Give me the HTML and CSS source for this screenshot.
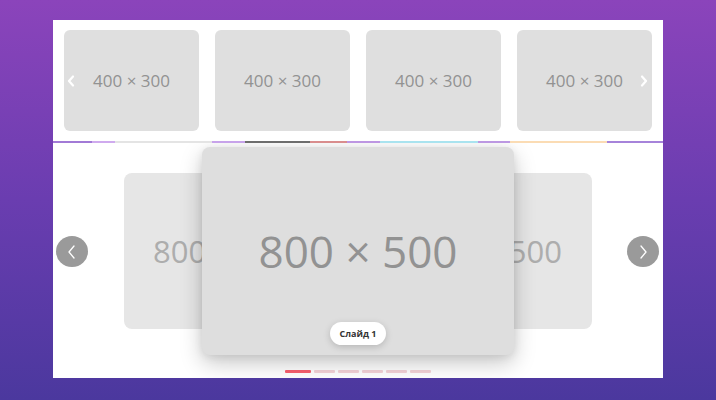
FILE: index.html
```html
<!DOCTYPE html>
<html lang="ru">
<head>
<meta charset="utf-8">
<title>Слайдер</title>
<link rel="stylesheet" href="styles.css">
</head>
<body>
  <section class="thumbs">
    <div class="thumb">400 × 300</div>
    <div class="thumb">400 × 300</div>
    <div class="thumb">400 × 300</div>
    <div class="thumb">400 × 300</div>
    <button class="thumbs-nav thumbs-prev" aria-label="Назад">
      <svg width="8" height="12" viewBox="0 0 8 12"><polyline points="6,1.5 2,6 6,10.5" fill="none" stroke="#fff" stroke-width="2.2" stroke-linecap="round" stroke-linejoin="round"/></svg>
    </button>
    <button class="thumbs-nav thumbs-next" aria-label="Вперёд">
      <svg width="8" height="12" viewBox="0 0 8 12"><polyline points="2,1.5 6,6 2,10.5" fill="none" stroke="#fff" stroke-width="2.2" stroke-linecap="round" stroke-linejoin="round"/></svg>
    </button>
  </section>

  <div class="strip">
    <span class="seg s1"></span><span class="seg s2"></span><span class="seg s3"></span>
    <span class="seg s4"></span><span class="seg s5"></span><span class="seg s6"></span>
    <span class="seg s7"></span><span class="seg s8"></span><span class="seg s9"></span>
    <span class="seg s10"></span><span class="seg s11"></span>
  </div>

  <section class="stage">
    <div class="slides">
      <div class="slide side side-left"><span class="side-label">800 × 500</span></div>
      <div class="slide main">
        800 × 500
        <span class="caption">Слайд 1</span>
      </div>
      <div class="slide side side-right"><span class="side-label">800 × 500</span></div>
    </div>
    <div class="dots">
      <span class="dot active"></span>
      <span class="dot"></span>
      <span class="dot"></span>
      <span class="dot"></span>
      <span class="dot"></span>
      <span class="dot"></span>
    </div>
    <button class="arrow arrow-prev" aria-label="Назад">
      <svg width="12" height="16" viewBox="0 0 12 16"><polyline points="8,2 3,8 8,14" fill="none" stroke="#fff" stroke-width="1.3" stroke-linecap="round" stroke-linejoin="round"/></svg>
    </button>
    <button class="arrow arrow-next" aria-label="Вперёд">
      <svg width="12" height="16" viewBox="0 0 12 16"><polyline points="4,2 9,8 4,14" fill="none" stroke="#fff" stroke-width="1.3" stroke-linecap="round" stroke-linejoin="round"/></svg>
    </button>
  </section>
</body>
</html>
```

FILE: styles.css
```css
* { box-sizing: border-box; }

html, body { height: 100%; }

body {
  margin: 0;
  padding: 20px 53px 22px;
  min-height: 400px;
  background: linear-gradient(180deg, #8b44bb 0%, #6a3db0 50%, #4b389e 100%);
  font-family: "Open Sans", "Noto Sans", sans-serif;
}

button {
  border: 0;
  padding: 0;
  background: none;
  cursor: pointer;
}

/* thumbnail row */
.thumbs {
  position: relative;
  height: 121px;
  background: #fff;
  padding: 10px 11px;
  display: flex;
  gap: 16px;
}

.thumb {
  flex: 1;
  background: #dfdfdf;
  border-radius: 6px;
  display: flex;
  align-items: center;
  justify-content: center;
  color: #929292;
  font-size: 17px;
}

.thumbs-nav {
  position: absolute;
  top: 50%;
  margin-top: -6px;
  width: 8px;
  height: 12px;
  display: flex;
}
.thumbs-prev { left: 14px; }
.thumbs-next { right: 15px; }

/* coloured progress strip */
.strip {
  display: flex;
  height: 2px;
  background: #fff;
}
.seg { height: 100%; }
.s1  { width: 39px; background: #a27ad6; }
.s2  { width: 23px; background: #cfaaee; }
.s3  { width: 97px; background: #e4e4e4; }
.s4  { width: 33px; background: #c7a3ea; }
.s5  { width: 65px; background: #6d6d6d; }
.s6  { width: 37px; background: #d98d8d; }
.s7  { width: 33px; background: #bd96e2; }
.s8  { width: 98px; background: #a9e3ef; }
.s9  { width: 32px; background: #bc98e2; }
.s10 { width: 97px; background: #fbdcb4; }
.s11 { flex: 1; background: #a683da; }

/* main carousel */
.stage {
  position: relative;
  height: 235px;
  background: #fff;
  padding-top: 4px;
  overflow: hidden;
}

.slides {
  height: 208px;
  display: flex;
  justify-content: center;
  align-items: center;
}

.slide {
  display: flex;
  align-items: center;
  border-radius: 8px;
}

.side {
  width: 234px;
  height: 156px;
  background: #e6e6e6;
  color: #adadad;
  font-size: 31px;
  white-space: nowrap;
  overflow: hidden;
}
/* only the outer part of each side label peeks out from behind the active slide */
.side-left { justify-content: flex-start; padding-left: 29px; }
.side-right { justify-content: flex-end; padding-right: 30px; margin-left: -156px; }

.main {
  position: relative;
  z-index: 2;
  justify-content: center;
  width: 312px;
  height: 208px;
  margin-left: -156px;
  background: #dedede;
  color: #929292;
  font-size: 44px;
  box-shadow: 0 8px 22px rgba(0, 0, 0, 0.22), 0 2px 8px rgba(0, 0, 0, 0.08);
}

.caption {
  position: absolute;
  left: 50%;
  bottom: 10px;
  transform: translateX(-50%);
  width: 56px;
  height: 23px;
  border-radius: 12px;
  background: #fff;
  box-shadow: 0 2px 7px rgba(0, 0, 0, 0.18);
  display: flex;
  align-items: center;
  justify-content: center;
  color: #333;
  font-size: 9px;
  font-weight: 700;
}

.dots {
  margin-top: 15px;
  display: flex;
  justify-content: center;
  gap: 3px;
}
.dot {
  width: 21px;
  height: 3px;
  border-radius: 1px;
  background: #f4d3d8;
}
.dot.active {
  width: 26px;
  background: #f8606f;
}

.arrow {
  position: absolute;
  top: 93px;
  width: 32px;
  height: 31px;
  border-radius: 50%;
  background: #9a9a9a;
  display: flex;
  align-items: center;
  justify-content: center;
}
.arrow-prev { left: 3px; }
.arrow-next { right: 4px; }
```
